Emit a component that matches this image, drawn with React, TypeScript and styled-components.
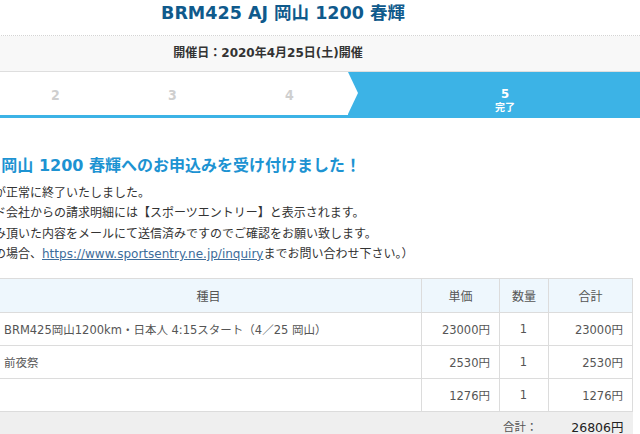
import styled, { createGlobalStyle } from "styled-components";

const GlobalStyle = createGlobalStyle`
  html, body {
    margin: 0;
    padding: 0;
    background: #fff;
  }
  body {
    overflow: hidden;
    font-family: "DejaVu Sans", "Noto Sans CJK JP", sans-serif;
    color: #333;
  }
`;

const Page = styled.div`
  width: 640px;
  height: 434px;
  overflow: hidden;
`;

const Frame = styled.div`
  margin-left: -120px;
  width: 782px;
`;

const Title = styled.h1`
  margin: 0;
  height: 36px;
  box-sizing: border-box;
  padding-left: 24px;
  border-bottom: 1px dotted #d4d4d4;
  font-size: 17.5px;
  line-height: 26px;
  font-weight: bold;
  color: #0f5a8c;
  text-align: center;
`;

const DateBand = styled.div`
  height: 36px;
  box-sizing: border-box;
  padding-right: 6px;
  background: #f8f8f8;
  border-bottom: 1px solid #dedede;
  font-size: 12px;
  font-weight: bold;
  line-height: 35px;
  color: #333;
  text-align: center;
`;

const Steps = styled.ol`
  display: flex;
  margin: 0;
  padding: 0;
  list-style: none;
  height: 46px;
`;

const Step = styled.li<{ $active?: boolean; $arrow?: boolean }>`
  position: relative;
  display: flex;
  flex-direction: column;
  align-items: center;
  justify-content: center;
  gap: ${(p) => (p.$active ? "1px" : "0")};
  box-sizing: border-box;
  flex: ${(p) => (p.$active ? "1" : "0 0 117px")};
  background: ${(p) => (p.$active ? "#3cb3e6" : "#fff")};
  border-bottom: ${(p) => (p.$active ? "none" : "3px solid #3cb3e6")};
  padding-top: ${(p) => (p.$active ? "8px" : "3px")};
  z-index: ${(p) => (p.$arrow ? 2 : 1)};
  font-family: "DejaVu Sans Condensed", "Roboto", sans-serif;
  font-stretch: condensed;
  color: ${(p) => (p.$active ? "#fff" : "#cfcfcf")};

  &::after {
    content: "";
    display: ${(p) => (p.$arrow ? "block" : "none")};
    position: absolute;
    top: 0;
    right: -10px;
    border-top: 21.5px solid transparent;
    border-bottom: 21.5px solid transparent;
    border-left: 10px solid #fff;
  }
`;

const StepNum = styled.span<{ $active?: boolean }>`
  font-size: ${(p) => (p.$active ? "13px" : "14px")};
  font-weight: bold;
  line-height: ${(p) => (p.$active ? "13px" : "16px")};
`;

const StepLabel = styled.span`
  font-family: "Noto Sans CJK JP", sans-serif;
  font-size: 10px;
  font-weight: bold;
  line-height: 11px;
`;

const Content = styled.div`
  margin-left: -78px;
  width: 720px;
`;

const Heading = styled.h2`
  margin: 38px 0 6px -24px;
  font-size: 16px;
  line-height: 20px;
  font-weight: bold;
  color: #1d93d2;
  white-space: nowrap;
`;

const Lines = styled.div`
  margin-left: 12px;
  font-family: "Noto Sans CJK JP", sans-serif;
  font-size: 12px;
  line-height: 20.3px;
  color: #333;
  white-space: nowrap;
`;

const Link = styled.a`
  font-family: "DejaVu Sans", "Noto Sans CJK JP", sans-serif;
  font-size: 12px;
  color: #3d6c9a;
  text-decoration: underline;
`;

const Table = styled.table`
  margin: 14px 0 0 73px;
  width: 637px;
  border-collapse: collapse;
  table-layout: fixed;
  font-size: 11.5px;
  color: #555;
`;

const Th = styled.th`
  height: 33px;
  padding: 0;
  background: #eef7fd;
  border: 1px solid #dcdcdc;
  font-family: "Noto Sans CJK JP", sans-serif;
  font-weight: normal;
  font-size: 12px;
  color: #555;
  text-align: center;
`;

const Td = styled.td<{ $align?: string }>`
  height: 32px;
  padding: 0 9px 0 8px;
  border: 1px solid #dcdcdc;
  text-align: ${(p) => p.$align || "left"};
  white-space: nowrap;
`;

const TotalRow = styled.tr`
  background: #efefef;
`;

const TotalLabel = styled.td`
  height: 28px;
  padding: 0 11px 0 0;
  text-align: right;
  font-family: "Noto Sans CJK JP", sans-serif;
  color: #555;
`;

const TotalValue = styled.td`
  padding: 0 9px 0 0;
  text-align: right;
  font-size: 12.5px;
  color: #222;
`;

const rows = [
  { name: "BRM425岡山1200km・日本人 4:15スタート（4／25 岡山）", price: "23000円", qty: "1", sum: "23000円" },
  { name: "前夜祭", price: "2530円", qty: "1", sum: "2530円" },
  { name: "", price: "1276円", qty: "1", sum: "1276円" },
];

export default function App() {
  return (
    <Page>
      <GlobalStyle />
      <Frame>
        <Title>BRM425 AJ 岡山 1200 春輝</Title>
        <DateBand>開催日：2020年4月25日(土)開催</DateBand>
        <Steps>
          <Step>
            <StepNum>1</StepNum>
          </Step>
          <Step>
            <StepNum>2</StepNum>
          </Step>
          <Step>
            <StepNum>3</StepNum>
          </Step>
          <Step $arrow>
            <StepNum>4</StepNum>
          </Step>
          <Step $active>
            <StepNum $active>5</StepNum>
            <StepLabel>完了</StepLabel>
          </Step>
        </Steps>
      </Frame>
      <Content>
        <Heading>BRM425 AJ 岡山 1200 春輝へのお申込みを受け付けました！</Heading>
        <Lines>
          <div>決済手続きが正常に終了いたしました。</div>
          <div>ご利用カード会社からの請求明細には【スポーツエントリー】と表示されます。</div>
          <div>本日お申込み頂いた内容をメールにて送信済みですのでご確認をお願い致します。</div>
          <div>
            （ご不明点の場合、<Link href="#">https://www.sportsentry.ne.jp/inquiry</Link>までお問い合わせ下さい。）
          </div>
        </Lines>
        <Table>
          <colgroup>
            <col style={{ width: 426 }} />
            <col style={{ width: 78 }} />
            <col style={{ width: 49 }} />
            <col style={{ width: 84 }} />
          </colgroup>
          <thead>
            <tr>
              <Th>種目</Th>
              <Th>単価</Th>
              <Th>数量</Th>
              <Th>合計</Th>
            </tr>
          </thead>
          <tbody>
            {rows.map((r, i) => (
              <tr key={i}>
                <Td>{r.name}</Td>
                <Td $align="right">{r.price}</Td>
                <Td $align="center">{r.qty}</Td>
                <Td $align="right">{r.sum}</Td>
              </tr>
            ))}
            <TotalRow>
              <TotalLabel colSpan={3}>合計：</TotalLabel>
              <TotalValue>26806円</TotalValue>
            </TotalRow>
          </tbody>
        </Table>
      </Content>
    </Page>
  );
}
